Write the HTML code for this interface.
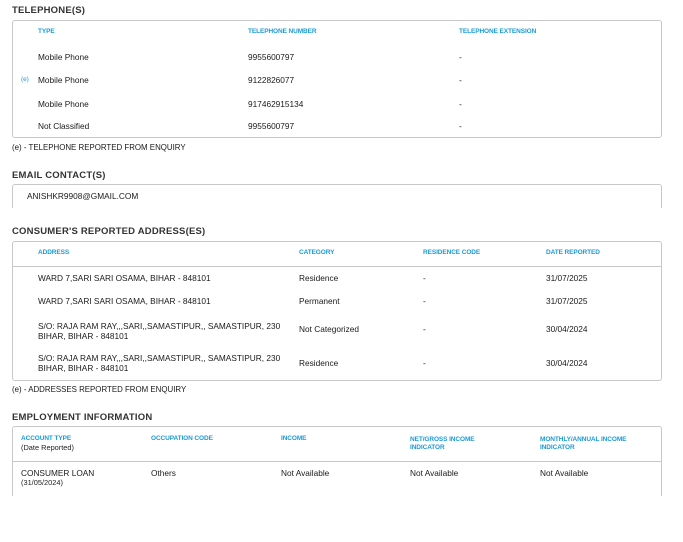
<!DOCTYPE html>
<html><head><meta charset="utf-8"><style>
*{margin:0;padding:0;box-sizing:border-box}
body{width:683px;height:542px;background:#fff;position:relative;font-family:"Liberation Sans",sans-serif;color:#222;overflow:hidden}
.a{position:absolute;white-space:nowrap;line-height:1}
.t{font-size:9.5px;font-weight:bold;color:#333;letter-spacing:0.2px}
.h{font-size:6.5px;font-weight:bold;color:#1a9bd7;letter-spacing:-0.1px}
.d{font-size:8.3px;color:#1a1a1a}
.n{font-size:7.9px;color:#1a1a1a}
.box{position:absolute;border:1px solid #c8c8c8;border-radius:3px}
.open{border-bottom:none;border-radius:3px 3px 0 0}
.ln{position:absolute;height:1px;background:#c8c8c8}
</style></head><body>
<div class="a t" style="left:12px;top:6px">TELEPHONE(S)</div>
<div class="box" style="left:12px;top:20px;width:650px;height:118px"></div>
<div class="a h" style="left:38px;top:29px">TYPE</div>
<div class="a h" style="left:248px;top:29px">TELEPHONE NUMBER</div>
<div class="a h" style="left:459px;top:29px">TELEPHONE EXTENSION</div>
<div class="a h" style="left:21px;top:77px;font-weight:normal">(e)</div>
<div class="a d" style="left:38px;top:53px">Mobile Phone</div><div class="a d" style="left:248px;top:53px">9955600797</div><div class="a d" style="left:459px;top:53px">-</div>
<div class="a d" style="left:38px;top:76px">Mobile Phone</div><div class="a d" style="left:248px;top:76px">9122826077</div><div class="a d" style="left:459px;top:76px">-</div>
<div class="a d" style="left:38px;top:100px">Mobile Phone</div><div class="a d" style="left:248px;top:100px">917462915134</div><div class="a d" style="left:459px;top:100px">-</div>
<div class="a d" style="left:38px;top:122px">Not Classified</div><div class="a d" style="left:248px;top:122px">9955600797</div><div class="a d" style="left:459px;top:122px">-</div>
<div class="a n" style="left:12px;top:144px">(e) - TELEPHONE REPORTED FROM ENQUIRY</div>

<div class="a t" style="left:12px;top:171px">EMAIL CONTACT(S)</div>
<div class="box open" style="left:12px;top:184px;width:650px;height:24px"></div>
<div class="a d" style="left:27px;top:192px">ANISHKR9908@GMAIL.COM</div>

<div class="a t" style="left:12px;top:227px">CONSUMER'S REPORTED ADDRESS(ES)</div>
<div class="box" style="left:12px;top:241px;width:650px;height:140px"></div>
<div class="ln" style="left:13px;top:266px;width:648px"></div>
<div class="a h" style="left:38px;top:250px">ADDRESS</div>
<div class="a h" style="left:299px;top:250px">CATEGORY</div>
<div class="a h" style="left:423px;top:250px">RESIDENCE CODE</div>
<div class="a h" style="left:546px;top:250px">DATE REPORTED</div>
<div class="a d" style="left:38px;top:274px">WARD 7,SARI SARI OSAMA, BIHAR - 848101</div><div class="a d" style="left:299px;top:274px">Residence</div><div class="a d" style="left:423px;top:274px">-</div><div class="a d" style="left:546px;top:274px">31/07/2025</div>
<div class="a d" style="left:38px;top:297px">WARD 7,SARI SARI OSAMA, BIHAR - 848101</div><div class="a d" style="left:299px;top:297px">Permanent</div><div class="a d" style="left:423px;top:297px">-</div><div class="a d" style="left:546px;top:297px">31/07/2025</div>
<div class="a d" style="left:38px;top:321px;line-height:10px">S/O: RAJA RAM RAY,,,SARI,,SAMASTIPUR,, SAMASTIPUR, 230<br>BIHAR, BIHAR - 848101</div><div class="a d" style="left:299px;top:325px">Not Categorized</div><div class="a d" style="left:423px;top:325px">-</div><div class="a d" style="left:546px;top:325px">30/04/2024</div>
<div class="a d" style="left:38px;top:353px;line-height:10px">S/O: RAJA RAM RAY,,,SARI,,SAMASTIPUR,, SAMASTIPUR, 230<br>BIHAR, BIHAR - 848101</div><div class="a d" style="left:299px;top:359px">Residence</div><div class="a d" style="left:423px;top:359px">-</div><div class="a d" style="left:546px;top:359px">30/04/2024</div>
<div class="a n" style="left:12px;top:386px">(e) - ADDRESSES REPORTED FROM ENQUIRY</div>

<div class="a t" style="left:12px;top:413px">EMPLOYMENT INFORMATION</div>
<div class="box open" style="left:12px;top:426px;width:650px;height:70px"></div>
<div class="ln" style="left:13px;top:461px;width:648px"></div>
<div class="a h" style="left:21px;top:436px">ACCOUNT TYPE</div>
<div class="a" style="left:21px;top:444px;font-size:7.4px">(Date Reported)</div>
<div class="a h" style="left:151px;top:436px">OCCUPATION CODE</div>
<div class="a h" style="left:281px;top:436px">INCOME</div>
<div class="a h" style="left:410px;top:436px;line-height:8px">NET/GROSS INCOME<br>INDICATOR</div>
<div class="a h" style="left:540px;top:436px;line-height:8px">MONTHLY/ANNUAL INCOME<br>INDICATOR</div>
<div class="a d" style="left:21px;top:469px">CONSUMER LOAN</div>
<div class="a" style="left:21px;top:479px;font-size:7.4px">(31/05/2024)</div>
<div class="a d" style="left:151px;top:469px">Others</div>
<div class="a d" style="left:281px;top:469px">Not Available</div>
<div class="a d" style="left:410px;top:469px">Not Available</div>
<div class="a d" style="left:540px;top:469px">Not Available</div>
</body></html>
